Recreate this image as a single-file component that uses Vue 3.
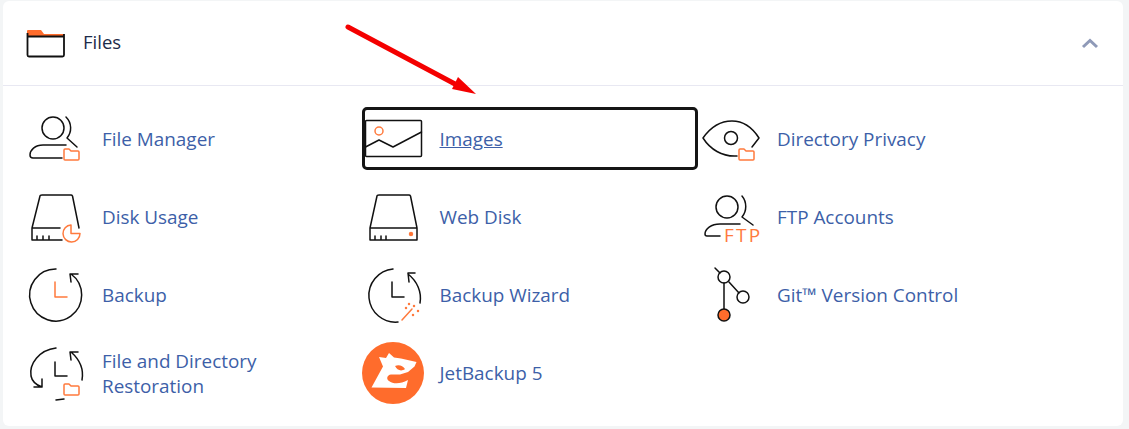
<template>
  <div class="page">
    <section class="card">
      <header class="card-head">
        <svg class="head-icon" width="40" height="30" viewBox="0 0 40 30">
          <path d="M1 8 V3 Q1 2 2 2 H15 L18 6 H38 V8 Z" fill="#ff6c2c" />
          <path d="M1.500 5 V27 Q1.500 28.500 3 28.500 H36.500 Q38 28.500 38 27 V6 M1.500 8.500 H38" fill="none" stroke="#111" stroke-width="1.800" />
        </svg>
        <span class="head-title">Files</span>
        <svg class="chevron" width="18" height="11" viewBox="0 0 18 11">
          <path d="M2 9 L9 2.500 L16 9" fill="none" stroke="#8f9ab8" stroke-width="3" />
        </svg>
      </header>

      <div class="tools">
        <a v-for="tool in tools" :key="tool.name" class="tool" :class="{ active: tool.active }" href="#">
          <span class="tool-icon">
            <svg width="64" height="62" viewBox="0 0 64 62" fill="none" stroke="#111" stroke-width="1.500" stroke-linecap="round" stroke-linejoin="round">
              <template v-if="tool.icon === 'manager'">
                <circle cx="28" cy="20" r="11" />
                <path d="M41 9 C47 15 47 24 42 30 L52 39" />
                <path d="M41 37 H18 C10 37 5 42 5 47 Q5 50 8 50 H37" />
                <path :d="folder(39, 41)" class="orange" />
              </template>
              <template v-else-if="tool.icon === 'image'">
                <rect x="3.500" y="12.500" width="56" height="36" rx="1" />
                <path d="M3.500 39 L17 32 L31 39 L59.500 24" />
                <circle cx="17" cy="23" r="4" class="orange" />
              </template>
              <template v-else-if="tool.icon === 'eye'">
                <path d="M52 39 L59 30 C52 19 42 13 32 13 C20 13 10 20 3 30 C10 41 22 49 37 48" />
                <circle cx="31" cy="30" r="6.500" />
                <path :d="folder(39, 41)" class="orange" />
              </template>
              <template v-else-if="tool.icon === 'usage'">
                <path d="M35 42 H7 M7 42 L15 10 Q15 9 17 9 H46 Q47 9 47.500 10 L54 42 M7 42 V54 H37 M12 50 V54 M18 50 V54 M24 50 V54" />
                <path d="M46 39 A8.500 8.500 0 1 0 55 47.500 H46 Z" class="orange" />
              </template>
              <template v-else-if="tool.icon === 'disk'">
                <path d="M8 42 L15 10 Q15 9 17 9 H47 Q48 9 48.500 10 L55 42 M8 42 H55 V54 H8 Z M13 50 V54 M19 50 V54 M24 50 V54" />
                <circle cx="49" cy="48" r="1.500" class="orange" fill="#ff6c2c" />
              </template>
              <template v-else-if="tool.icon === 'ftp'">
                <circle cx="27" cy="21" r="11" />
                <path d="M42 10 C47 16 47 25 42 31 L53 39" />
                <path d="M40 38 H20 C11 38 5 43 5 48 Q5 50 7 50 H20" />
                <text x="24" y="56" class="ftp">FTP</text>
              </template>
              <template v-else-if="tool.icon === 'backup'">
                <path d="M31 5 A26 26 0 1 0 46 10 M53 10 H45 L46 18" />
                <path d="M30 18 V33 H42" class="orange" />
              </template>
              <template v-else-if="tool.icon === 'wizard'">
                <path d="M31 5 A26 26 0 1 0 36 58 M58 39 C60 28 55 17 46 10 M53 9 H46 L47 18" />
                <path d="M30 18 V33 H42" />
                <path d="M40 56 L50 45" class="orange" />
                <path d="M47 40 V40.100 M44 44 V44.100 M52 42 V42.100 M56 47 V47.100 M51 51 V51.100" class="orange" stroke-width="2.500" />
              </template>
              <template v-else-if="tool.icon === 'git'">
                <path d="M15 4 L20 9 M24 19 V45 M29 18 L39 29" />
                <circle cx="24" cy="13" r="6" />
                <circle cx="43" cy="33" r="6" />
                <circle cx="24" cy="51" r="6" fill="#ff6c2c" />
              </template>
              <template v-else-if="tool.icon === 'restore'">
                <path d="M31 6 C14 8 4 22 6 34 C7 39 11 43 17 45 M9 45 H17 L17 37" />
                <path d="M57 38 C59 27 54 17 46 10 M53 10 H45 L46 18 M31 58 L39 57" />
                <path d="M30 20 V34 H42" />
                <path :d="folder(39, 42)" class="orange" />
              </template>
              <template v-else-if="tool.icon === 'jet'">
                <circle cx="31" cy="31" r="31" fill="#ff6c2c" stroke="none" />
                <path d="M17 15 L24 16 L27 11 L32 15.500 L39 16.500 L54.500 20 L52.500 24.500 L46 30 L38 32.500 L29 32.500 C25 33 24 37 27 39 C31 42 38 42.500 46 38 L44 46 L9.500 45.500 L21 24.500 Z" fill="#fff" stroke="none" />
                <path d="M33 24 C37 22 41 24 43 27 C39 30 35 28 33 24 Z" fill="#ff6c2c" stroke="none" />
              </template>
            </svg>
          </span>
          <span class="tool-name">{{ tool.name }}</span>
        </a>
      </div>
    </section>

    <svg class="arrow" width="140" height="80" viewBox="0 0 140 80">
      <path d="M3 3 L110 60" fill="none" stroke="#f40000" stroke-width="5" stroke-linecap="round" />
      <path d="M131 70 L107 65 L113 53 Z" fill="#f40000" />
    </svg>
  </div>
</template>

<script setup>
const tools = [
  { name: "File Manager", icon: "manager" },
  { name: "Images", icon: "image", active: true },
  { name: "Directory Privacy", icon: "eye" },
  { name: "Disk Usage", icon: "usage" },
  { name: "Web Disk", icon: "disk" },
  { name: "FTP Accounts", icon: "ftp" },
  { name: "Backup", icon: "backup" },
  { name: "Backup Wizard", icon: "wizard" },
  { name: "Git™ Version Control", icon: "git" },
  { name: "File and Directory Restoration", icon: "restore" },
  { name: "JetBackup 5", icon: "jet" },
];

// small orange folder used as a badge on several icons
const folder = (x, y) =>
  `M${x} ${y + 1} Q${x} ${y} ${x + 1} ${y} H${x + 5} L${x + 7} ${y + 2} H${x + 14} Q${x + 15} ${y + 2} ${x + 15} ${y + 3} V${y + 10} Q${x + 15} ${y + 11} ${x + 14} ${y + 11} H${x + 1} Q${x} ${y + 11} ${x} ${y + 10} Z`;
</script>

<style scoped>
.page {
  position: relative;
  width: 1129px;
  height: 429px;
  padding: 1px 6px 3px 3px;
  box-sizing: border-box;
  background: #f3f5f6;
  font-family: "Open Sans", sans-serif;
}

.card {
  height: 100%;
  background: #fff;
  border-radius: 6px;
}

.card-head {
  display: flex;
  align-items: center;
  height: 84px;
  padding: 0 24px 0 23px;
  border-bottom: 1px solid #e8e8f2;
}

.head-icon {
  margin-right: 17px;
}

.head-title {
  font-size: 18.500px;
  margin-top: -4px;
  color: #1c2b49;
}

.chevron {
  margin-left: auto;
}

.tools {
  display: grid;
  grid-template-columns: repeat(3, 337.500px);
  row-gap: 16px;
  padding: 22px 0 0 21.500px;
}

.tool {
  position: relative;
  display: flex;
  align-items: center;
  gap: 13.500px;
  height: 62px;
  color: #3d5fa8;
  text-decoration: none;
  font-size: 18.900px;
  line-height: 25px;
}

.tool-icon {
  flex: none;
  width: 64px;
  height: 62px;
}

.tool-icon svg {
  display: block;
}

.tool-name {
  max-width: 200px;
  padding-top: 1px;
}

.tool.active::after {
  content: "";
  position: absolute;
  top: -1px;
  left: 0;
  width: 336px;
  height: 63px;
  box-sizing: border-box;
  border: 3px solid #151515;
  border-radius: 5px;
}

.tool.active .tool-name {
  text-decoration: underline;
}

.orange {
  stroke: #ff7a3d;
}

.ftp {
  font-family: "Open Sans", sans-serif;
  font-size: 19px;
  letter-spacing: 2.300px;
  fill: #ff7a3d;
  stroke: none;
}

.arrow {
  position: absolute;
  left: 345px;
  top: 24px;
}
</style>
